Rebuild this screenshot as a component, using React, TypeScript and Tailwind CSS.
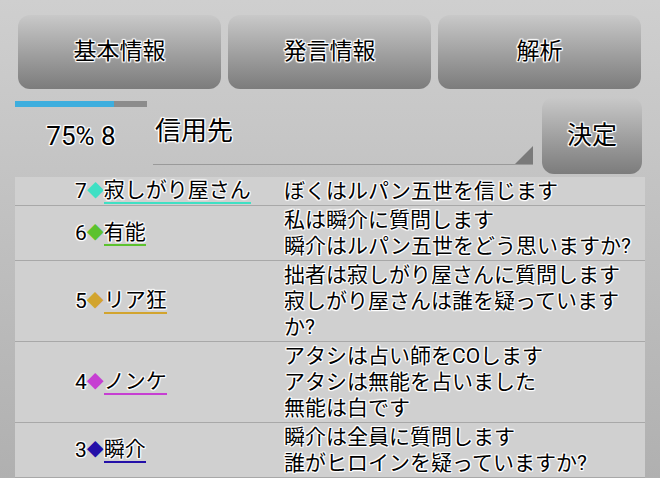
import React from "react";

const outline =
  "[text-shadow:1px_0_1px_#fff,-1px_0_1px_#fff,0_1px_1px_#fff,0_-1px_1px_#fff,1px_1px_1px_#fff,-1px_-1px_1px_#fff,1px_-1px_1px_#fff,-1px_1px_1px_#fff]";

type Row = {
  no: number;
  name: string;
  color: string;
  lines: string[];
};

const rows: Row[] = [
  { no: 7, name: "寂しがり屋さん", color: "#3fe0c4", lines: ["ぼくはルパン五世を信じます"] },
  { no: 6, name: "有能", color: "#5cc22e", lines: ["私は瞬介に質問します", "瞬介はルパン五世をどう思いますか?"] },
  { no: 5, name: "リア狂", color: "#d2a42e", lines: ["拙者は寂しがり屋さんに質問します", "寂しがり屋さんは誰を疑っていますか?"] },
  { no: 4, name: "ノンケ", color: "#c63ed2", lines: ["アタシは占い師をCOします", "アタシは無能を占いました", "無能は白です"] },
  { no: 3, name: "瞬介", color: "#2410a8", lines: ["瞬介は全員に質問します", "誰がヒロインを疑っていますか?"] },
];

function TabButton({ label }: { label: string }) {
  return (
    <button className="flex-1 h-[74px] rounded-[12px] bg-gradient-to-b from-[#c9c9c9] to-[#7c7c7c] flex items-center justify-center">
      <span className={`text-[23px] text-black ${outline}`}>{label}</span>
    </button>
  );
}

export default function App() {
  return (
    <div
      className="w-[660px] h-[478px] overflow-hidden bg-gradient-to-b from-[#cfcfcf] to-[#b0b0b0] text-black"
      style={{ fontFamily: "Roboto, 'Noto Sans CJK JP', sans-serif" }}
    >
      {/* tabs */}
      <div className="flex gap-[7px] pl-[18px] pr-[19px] pt-[15px]">
        <TabButton label="基本情報" />
        <TabButton label="発言情報" />
        <TabButton label="解析" />
      </div>

      {/* progress + spinner + submit */}
      <div className="flex mt-[8px] pl-[15px]">
        <div className="w-[132px] flex flex-col">
          <div className="mt-[4px] h-[6px] w-full bg-[#8c8c8c]">
            <div className="h-full w-[75%] bg-[#3eaede]" />
          </div>
          <div className={`mt-[14px] text-center text-[26px] leading-[30px] ${outline}`}>75% 8</div>
        </div>

        <div className="relative ml-[6px] w-[380px] h-[68px] border-b border-[#9a9a9a]">
          <div className={`pl-[2px] pt-[19px] text-[26px] leading-[30px] ${outline}`}>信用先</div>
          <div className="absolute right-0 bottom-0 w-0 h-0 border-l-[18px] border-l-transparent border-b-[18px] border-b-[#7a7a7a]" />
        </div>

        <button className="ml-[9px] w-[100px] h-[77px] rounded-[12px] bg-gradient-to-b from-[#c9c9c9] to-[#7c7c7c] flex items-center justify-center">
          <span className={`text-[25px] ${outline}`}>決定</span>
        </button>
      </div>

      {/* message list */}
      <div className="mt-[3px] ml-[15px] w-[630px] bg-[#d0d0d0]">
        {rows.map((r) => (
          <div key={r.no} className="flex border-b border-[#a8a8a8] py-px">
            <div className="w-[269px] pl-[60px] flex items-center">
              <span className={`text-[21px] leading-[26px] ${outline}`}>{r.no}</span>
              <span className="text-[17px] leading-[26px]" style={{ color: r.color }}>◆</span>
              <span
                className={`text-[21px] leading-[24px] border-b-2 ${outline}`}
                style={{ borderColor: r.color }}
              >
                {r.name}
              </span>
            </div>
            <div className={`flex-1 pr-[10px] text-[21px] leading-[26px] ${outline}`}>
              {r.lines.map((l, i) => (
                <div key={i}>{l}</div>
              ))}
            </div>
          </div>
        ))}
      </div>
    </div>
  );
}
